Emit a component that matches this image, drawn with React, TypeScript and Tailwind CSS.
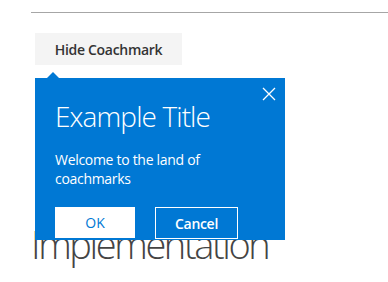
import React from "react";

export default function App() {
  const font = { fontFamily: '"Open Sans", "Noto Sans", sans-serif' };
  return (
    <div className="relative w-[388px] h-[282px] overflow-hidden bg-white" style={font}>
      <div className="pt-[12px] pl-[31px]">
        <div className="h-px bg-[#a6a6a6]" />
      </div>
      <button className="ml-[35px] mt-[20px] h-[32px] w-[147px] bg-[#f4f4f4] text-[14px] font-semibold text-[#333333] tracking-[-0.3px]">
        Hide Coachmark
      </button>
      <h1 className="mt-[160px] ml-[31px] text-[38px] leading-[38px] font-light text-[#444444] tracking-[-2.4px]">
        Implementation
      </h1>

      <div className="absolute left-[35px] top-[72px]">
        <div className="ml-[12px] w-0 h-0 border-x-[6px] border-x-transparent border-b-[6px] border-b-[#0078d4]" />
        <div className="relative w-[250px] h-[162px] bg-[#0078d4] pl-[20px] pt-[20px] text-white">
          <button className="absolute right-[8px] top-[8px] w-[16px] h-[16px] flex items-center justify-center">
            <svg width="14" height="14" viewBox="0 0 14 14" fill="none">
              <path d="M1 1L13 13M13 1L1 13" stroke="white" strokeWidth="1.3" />
            </svg>
          </button>
          <div className="text-[28px] leading-[36px] font-light tracking-[-0.9px]">Example Title</div>
          <div className="mt-[16px] text-[14px] leading-[19px] w-[190px] tracking-[-0.3px]">
            Welcome to the land of coachmarks
          </div>
          <div className="mt-[19px] flex gap-[20px]">
            <button className="w-[80px] h-[31px] bg-white text-[#0078d4] text-[14px]">OK</button>
            <button className="w-[83px] h-[32px] border border-white text-white text-[14px] font-semibold tracking-[-0.3px]">
              Cancel
            </button>
          </div>
        </div>
      </div>
    </div>
  );
}
